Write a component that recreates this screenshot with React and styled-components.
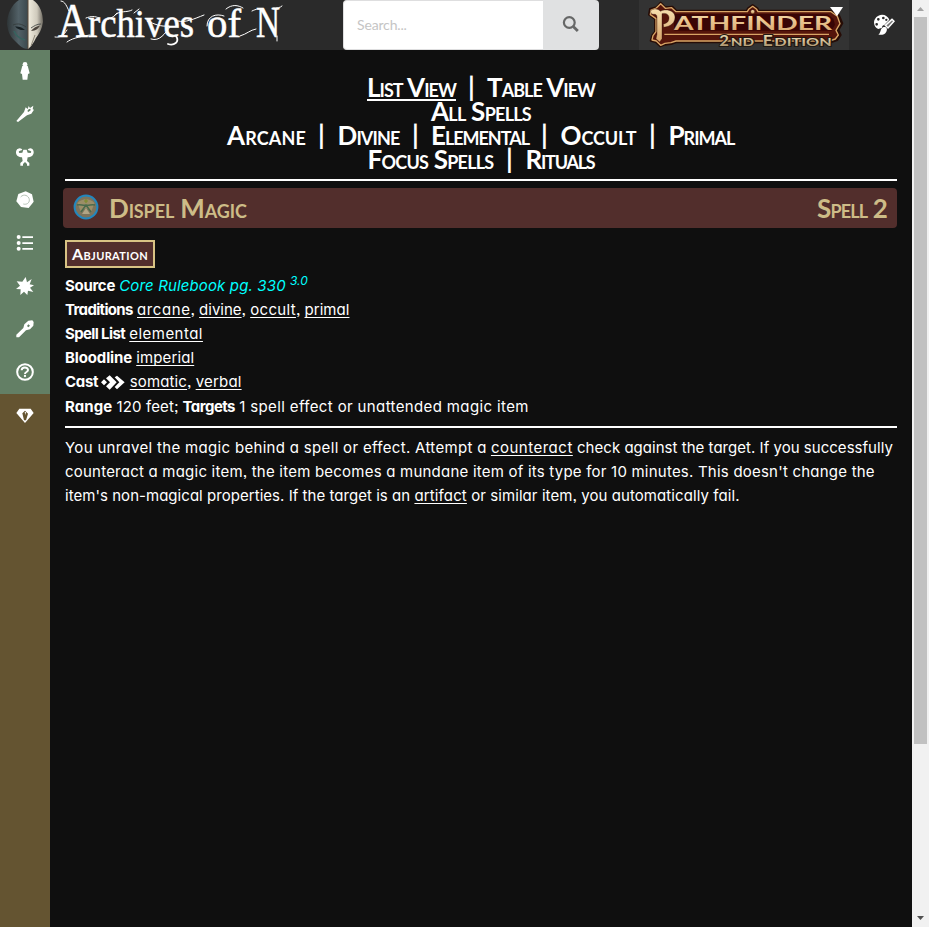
import React from 'react';
import styled, { createGlobalStyle, css } from 'styled-components';

const Global = createGlobalStyle`
  * { box-sizing: border-box; }
  body { margin: 0; background: #0f0f0f; color: #fff; overflow: hidden; }
`;

const bodyFont = css`
  font-family: "Century Gothic", Inter, sans-serif;
  font-feature-settings: "cv11", "ss03";
`;
const titleFont = css`
  font-family: "Century Gothic", Lato, sans-serif;
  font-weight: 700;
  font-variant: small-caps;
`;

const Window = styled.div`
  display: grid;
  grid-template-columns: 1fr 17px;
  height: 100vh;
`;
const Page = styled.div`
  display: flex;
  flex-direction: column;
  min-width: 0;
`;
const Header = styled.header`
  display: flex;
  flex: 0 0 50px;
  background: #2a2a2a;
`;
const Brand = styled.a`
  display: block;
  width: 343px;
  height: 50px;
`;
const SearchBox = styled.div`
  display: flex;
  width: 256px;
  height: 50px;
`;
const SearchInput = styled.input`
  width: 200px;
  padding: 0 13px 2px;
  border: 1px solid #dededf;
  border-right: 0;
  border-radius: 4px 0 0 4px;
  outline: 0;
  background: #fff;
  font: 14px Lato, sans-serif;
  letter-spacing: -0.15px;
  &::placeholder { color: #c5c5c5; opacity: 1; }
`;
const SearchButton = styled.button`
  width: 56px;
  padding: 0;
  border: 0;
  border-radius: 0 4px 4px 0;
  background: #e0e1e2;
`;
const GameMenu = styled.div`
  width: 210px;
  height: 50px;
  margin-left: 40px;
  background: #333;
`;
const ThemeButton = styled.div`
  display: flex;
  align-items: center;
  justify-content: center;
  flex: 1;
  padding-left: 6px;
`;
const Drawing = styled.svg`
  display: block;
  width: ${(p) => p.$w}px;
  height: ${(p) => p.$h}px;
`;
const Body = styled.div`
  display: flex;
  flex: 1;
`;
const SideNav = styled.nav`
  display: flex;
  flex-direction: column;
  width: 50px;
  background: #645431;
`;
const NavItem = styled.a`
  display: flex;
  align-items: center;
  justify-content: center;
  height: 43px;
  padding-bottom: 1px;
  color: #fff;
  background: ${(p) => (p.$alt ? '#645431' : '#637f65')};
`;
const Content = styled.main`
  flex: 1;
  min-width: 0;
  padding: 26px 15px 0;
`;
const ViewNav = styled.div`
  ${titleFont}
  font-size: 26px;
  line-height: 23px;
  text-align: center;
`;
const ViewRow = styled.div`
  display: flex;
  justify-content: center;
  height: 24px;
  white-space: pre;
`;
const ViewLink = styled.a`
  width: ${(p) => p.$w}px;
  letter-spacing: ${(p) => p.$ls}px;
  color: #fff;
  ${(p) => p.$on && css`height: 25px; border-bottom: 2px solid #fff;`}
`;
const Bar = styled.span`
  width: 31px;
  text-align: center;
`;
const Rule = styled.hr`
  height: 2px;
  margin: ${(p) => p.$m};
  border: 0;
  background: #fff;
`;
const SpellTitle = styled.h1`
  ${titleFont}
  display: flex;
  align-items: center;
  height: 40px;
  margin: 0 0 12px -2px;
  width: 834px;
  padding: 0 10px 2px;
  border-radius: 4px;
  background: #522e2c;
  color: #cdbc87;
  font-size: 26px;
  line-height: 40px;
`;
const SpellName = styled.span`
  flex: 1;
  margin: 2px 0 0 10px;
  letter-spacing: -0.12px;
`;
const SpellLevel = styled.span`
  margin-top: 2px;
  letter-spacing: -0.84px;
`;
const Trait = styled.span`
  ${titleFont}
  display: block;
  width: 90px;
  height: 28px;
  border: 2px solid #d8c384;
  background: #522e2c;
  font-size: 16px;
  line-height: 24px;
  letter-spacing: 0.36px;
  text-align: center;
`;
const Details = styled.div`
  ${bodyFont}
  padding-top: 6px;
  font-size: 15px;
`;
const DetailRow = styled.div`
  height: ${(p) => (p.$tall ? 25 : 24)}px;
  line-height: ${(p) => (p.$tall ? 26 : 24)}px;
  white-space: nowrap;
`;
const Label = styled.b`
  letter-spacing: ${(p) => p.$ls}px;
`;
const Link = styled.a`
  text-decoration: underline 1px;
  text-underline-offset: 2px;
  text-decoration-skip-ink: none;
  letter-spacing: ${(p) => p.$ls}px;
`;
const Run = styled.span`
  letter-spacing: ${(p) => p.$ls}px;
`;
const Source = styled.a`
  color: #00ffff;
  font-style: italic;
  letter-spacing: 0.14px;
`;
const Edition = styled.sup`
  color: #00ffff;
  font-size: 12px;
  font-style: italic;
  line-height: 0;
`;
const Actions = styled.svg`
  width: 24px;
  height: 15px;
  margin-left: -1px;
  vertical-align: -3px;
`;
const Description = styled.div`
  ${bodyFont}
  font-size: 15px;
  line-height: 24px;
  white-space: nowrap;
`;
const ScrollTrack = styled.div`
  display: flex;
  flex-direction: column;
  align-items: center;
  background: #f1f1f1;
`;
const ScrollThumb = styled.div`
  width: 13px;
  height: 727px;
  background: #c1c1c1;
`;
const ScrollGap = styled.div`
  flex: 1;
`;

const Logo = () => (
  <Drawing $w={343} $h={50} viewBox="0 0 343 50">
    <defs>
      <linearGradient id="dark" x1="0" x2="1"><stop offset="0" stopColor="#2e3537" /><stop offset=".55" stopColor="#526167" /><stop offset="1" stopColor="#3b484d" /></linearGradient>
      <linearGradient id="light" x1="0" x2="1"><stop offset="0" stopColor="#f1eddf" /><stop offset=".6" stopColor="#cfcabc" /><stop offset="1" stopColor="#6d6960" /></linearGradient>
    </defs>
    <path d="M28 0H19C11 5 7 15 7 24c1 8 3 12 7 16 4 4 8 9 14 9z" fill="url(#dark)" />
    <path d="M28 0h5c7 5 10 13 10 22-1 7-4 12-7 16-2 4-5 9-8 11z" fill="url(#light)" />
    <path d="M28 0v49" stroke="#5b4938" strokeWidth="1" />
    <path d="M15 26.500c3-.5 7 .5 10 3.500-4 .5-7-.5-10-3.500z" fill="#182124" />
    <path d="M31 31c2-3 6-5 9-5.500-2 3.500-4 5-9 5.500z" fill="#4b443d" />
    <path d="M13 25c5-2 9-1 13 2M31 28c3-2 6-4 10-4" stroke="#343a3a" strokeWidth=".8" fill="none" />
    <path d="M14 31c2 5 7 8 11 9" stroke="#37635f" strokeWidth="1.600" fill="none" />
    <path d="M35 35l-4 11" stroke="#8e8778" strokeWidth="1" fill="none" />
    <g fill="#fff" stroke="#fff" strokeWidth=".5" fontFamily="Liberation Serif, serif" fontSize="39">
      <text x="58" y="37" fontSize="48" textLength="30" lengthAdjust="spacingAndGlyphs">A</text>
      <text x="88" y="37" textLength="106" lengthAdjust="spacingAndGlyphs">rchives</text>
      <text x="207" y="37" textLength="34" lengthAdjust="spacingAndGlyphs">of</text>
      <text x="256" y="37" fontSize="44" textLength="24" lengthAdjust="spacingAndGlyphs">N</text>
    </g>
    <g fill="none" stroke="#fff" strokeWidth="1" strokeLinecap="round">
      <path d="M61 1c4 0 6 6 8 10M55 37c5 1 9-2 12-7M67 42c4-3 10-5 23-7M86 18c5-2 9-2 13 0M108 19c4-1 7-3 9-6M115 15c5-5 12-2 17-5M134 13l5-4M147 21c8 3 13 6 22 5M151 39c9 3 14-6 19-12M178 21c7 2 16-2 26-6M207 26c0-10 9-13 17-10M226 9c6-5 12-4 17-1M240 36c7-2 10-6 16-7M252 11c4-2 8-3 12-1M273 8c4 0 7 0 9-2M277 36v5" />
      <path d="M176 36c4 6-2 10-8 8" strokeWidth="1.800" />
    </g>
  </Drawing>
);

const Pathfinder = () => (
  <Drawing $w={210} $h={50} viewBox="0 0 630 150">
    <defs>
      <linearGradient id="gold" x1="0" x2="0" y1="0" y2="1"><stop offset="0" stopColor="#f8dfae" /><stop offset="1" stopColor="#d6a269" /></linearGradient>
      <linearGradient id="steel" x1="0" x2="0" y1="0" y2="1"><stop offset="0" stopColor="#fff1cc" /><stop offset="1" stopColor="#a48b63" /></linearGradient>
    </defs>
    <path d="M52 22l13-14 14 14 21-2 12 12h211l4-7 14-10 14 10 4 7h221l20 14 10 24-12 20 7 15-10 15-20 7H111l-15 5-19 2-13 5-14-13-15-4 5-17 8-10V57l-18-13 3-17z" fill="#260c06" stroke="#260c06" strokeWidth="6" strokeLinejoin="round" />
    <path d="M52 24l13-13 14 14 19-2 13 12h214l4-7 12-9 12 9 4 7h219l19 14 8 22-12 20 7 14-9 12-18 6H111l-15 5-18 2-13 6-13-13-13-3 3-13 9-12V56l-17-12 2-14z" fill="#55150b" stroke="#d9a566" strokeWidth="4" strokeLinejoin="round" />
    <path d="M103 42H565l18 14 5 18-10 18H106z" fill="#390505" />
    <path d="M76 103H570" stroke="#d9a566" strokeWidth="4" />
    <g fill="url(#gold)" stroke="#260c06" strokeWidth="1">
      <path d="M35 32c8-6 21-8 29 2 14-9 44-4 44 17 0 18-13 28-34 31l-1-10c14-3 17-10 17-19 0-10-9-15-21-12v75l-7 10-11-10 3-13V52c0-8-4-10-10-9-6 0-11-6-9-11z" />
      <circle cx="341" cy="35" r="6" />
    </g>
    <text x="105" y="91" fontFamily="Lato, sans-serif" fontWeight="700" fontSize="57" textLength="474" lengthAdjust="spacingAndGlyphs" fill="url(#gold)">ATHFINDER</text>
    <g fill="url(#steel)" stroke="#211913" strokeWidth="6" paintOrder="stroke" fontFamily="Lato, sans-serif" fontWeight="700">
      <text x="241" y="137" fontSize="48" textLength="29" lengthAdjust="spacingAndGlyphs">2</text>
      <text x="275" y="137" fontSize="36" textLength="70" lengthAdjust="spacingAndGlyphs">ND</text>
      <text x="371" y="137" fontSize="46" textLength="30" lengthAdjust="spacingAndGlyphs">E</text>
      <text x="406" y="137" fontSize="36" textLength="172" lengthAdjust="spacingAndGlyphs">DITION</text>
    </g>
    <path d="M573 21h39l-18 28z" fill="#fff" />
  </Drawing>
);

const icons = [
  <><circle cx="27" cy="7" r="7" /><path d="M19 11h16l6 23-5 2-2 17H20l-2-17-5-2z" /></>,
  <path fillRule="evenodd" d="M29 7l6 5 3-9 4 6 10-7-2 11 4 1-8 12-13 5L6 51l-5-3 23-27zm9 6l-4 5 3 3 7-5-1-5z" />,
  <path d="M5 3c7-4 12-1 14 3l-7 2c-4 1-5 4-2 7l9-1 3-9h10l3 9 9 1c3-3 2-6-2-7l-7-2c2-4 8-7 14-3 5 5 6 14 0 20-5 4-10 5-14 5l-2 11 7 6v8h-7v-5l-6-6-6 6v5h-8v-8l7-6-2-11c-4 0-9-1-14-5-6-6-5-15 0-20z" />,
  <><path d="M29 1l19 9 5 22-15 19-23-3L1 31 7 9z" /><path d="M14 18c9-11 25-4 26 8 1 10-9 16-18 13" fill="none" stroke="#b4c2b5" strokeWidth="3" /></>,
  <><circle cx="8" cy="9" r="6" /><circle cx="8" cy="27" r="6" /><circle cx="8" cy="44" r="6" /><path d="M19 7h32v5H19zM19 25h32v5H19zM19 42h32v5H19z" /></>,
  <path d="M29 0l4 16 14-10-6 16 13 3-12 7 10 13-16-4-2 13-10-10-11 10 1-17-14-1 12-10L2 13l17 1z" />,
  <path fillRule="evenodd" d="M37 2l12-1 4 5-1 11-10 11-12 3L9 52H1v-8l21-20 3-11zm0 11l-4 5 4 4 5-5z" />,
  <><circle cx="27" cy="27" r="23.5" fill="none" stroke="currentColor" strokeWidth="6" /><path d="M17 22c0-11 19-11 19-1 0 7-9 5-9 12" fill="none" stroke="currentColor" strokeWidth="6" /><circle cx="27" cy="39" r="3.5" /></>,
  <path fillRule="evenodd" d="M10 8h34l9 13-26 30L1 21zm17 6l-8 8 5 21h6l6-20zm-1 4h4l-2 9z" />,
];

const views = [
  [['List View', 89, -0.95, true], ['Table View', 108, -0.97]],
  [['All Spells', 100, -0.74]],
  [['Arcane', 79, 0.15], ['Divine', 63, -0.86], ['Elemental', 98, -1.03], ['Occult', 77, -0.08], ['Primal', 67, -0.98]],
  [['Focus Spells', 127, -0.76], ['Rituals', 70, -1.23]],
];

export default function App() {
  return (
    <Window>
      <Global />
      <Page>
        <Header>
          <Brand><Logo /></Brand>
          <SearchBox>
            <SearchInput placeholder="Search..." />
            <SearchButton aria-label="Search">
              <Drawing $w={56} $h={50} viewBox="0 0 56 50" fill="none" stroke="#666767">
                <circle cx="26.3" cy="22.5" r="5.4" strokeWidth="2.2" />
                <path d="M30.5 26.7l4.300 4.300" strokeWidth="2.8" />
              </Drawing>
            </SearchButton>
          </SearchBox>
          <GameMenu><Pathfinder /></GameMenu>
          <ThemeButton>
            <Drawing $w={22} $h={22} viewBox="0 0 66 66" fill="#fff">
              <path fillRule="evenodd" d="M27 2c10 0 19 6 22 15L34 33c-4 1-7 3-7 8l-11 4C8 43 3 34 3 25 4 12 14 3 27 2zM16 12a4 4 0 100 8 4 4 0 000-8zm15-4a4 4 0 100 8 4 4 0 000-8zM11 27a4 4 0 100 8 4 4 0 000-8zm29-13a3 3 0 100 7 3 3 0 000-7z" />
              <path d="M37 34l20-18 6 6-18 20z" fill="#777" stroke="#fff" strokeWidth="4.500" />
              <path d="M30 40c9-3 15 4 10 13-4 8-13 11-24 9 8-4 5-18 14-22z" />
            </Drawing>
          </ThemeButton>
        </Header>
        <Body>
          <SideNav>
            {icons.map((icon, i) => (
              <NavItem key={i} $alt={i === 8}>
                <Drawing $w={18} $h={18} viewBox="0 0 54 54" fill="currentColor">{icon}</Drawing>
              </NavItem>
            ))}
          </SideNav>
          <Content>
            <ViewNav>
              {views.map((row) => (
                <ViewRow key={row[0][0]}>
                  {row.map(([name, w, ls, on], i) => (
                    <React.Fragment key={name}>
                      {i > 0 && <Bar>|</Bar>}
                      <ViewLink $w={w} $ls={ls} $on={on}>{name}</ViewLink>
                    </React.Fragment>
                  ))}
                </ViewRow>
              ))}
            </ViewNav>
            <Rule $m="7px 0" />
            <SpellTitle>
              <Drawing $w={26} $h={26} viewBox="0 0 26 26">
                <circle cx="13" cy="13" r="11.400" fill="#7d745c" stroke="#2387bd" strokeWidth="2" />
                <path d="M4.500 9c5-5 12-5 17 0l-3 8-5.500-3-5.500 3z" fill="#9b8e68" />
                <path d="M4 11c4-1 6 1 9 0 3 1 5-1 9 0M8 18l5-7 5 7" fill="none" stroke="#4a6b4c" strokeWidth="1.500" />
                <path d="M9 20l4-6 4 6z" fill="#b0a585" />
                <path d="M13 5v4M11 7h4" stroke="#7d8c2c" strokeWidth="1.200" />
              </Drawing>
              <SpellName>Dispel Magic</SpellName>
              <SpellLevel>Spell 2</SpellLevel>
            </SpellTitle>
            <Trait>Abjuration</Trait>
            <Details>
              <DetailRow><Label $ls={-0.31}>Source</Label> <Source>Core Rulebook pg. 330</Source> <Edition>3.0</Edition></DetailRow>
              <DetailRow><Label $ls={-0.66}>Traditions</Label> <Link $ls={0.6}>arcane</Link>, <Link $ls={0}>divine</Link>, <Link $ls={0.34}>occult</Link>, <Link $ls={0.05}>primal</Link></DetailRow>
              <DetailRow><Label $ls={-0.63}>Spell List</Label> <Link $ls={0.47}>elemental</Link></DetailRow>
              <DetailRow><Label $ls={-0.14}>Bloodline</Label> <Link $ls={0.12}>imperial</Link></DetailRow>
              <DetailRow>
                <Label $ls={-0.3}>Cast</Label>{' '}
                <Actions viewBox="0 0 72 45" fill="#fff">
                  <path d="M9 13l9 9-9 9-9-9zM15 10L26 1l21 21-21 22-11-10 12-12zM41 7l7-5 23 20-23 21-7-7 14-14z" />
                </Actions>{' '}
                <Link $ls={0.15}>somatic</Link>, <Link $ls={0.2}>verbal</Link>
              </DetailRow>
              <DetailRow $tall><Label $ls={0.1}>Range</Label> <Run $ls={0.11}>120 feet;</Run> <Label $ls={-0.55}>Targets</Label> <Run $ls={0.37}>1 spell effect or unattended magic item</Run></DetailRow>
            </Details>
            <Rule $m="7px 0 8px" />
            <Description>
              <Run $ls={0.32}>You unravel the magic behind a spell or effect. Attempt a</Run> <Link $ls={0.5}>counteract</Link> <Run $ls={0.03}>check against the target. If you successfully</Run><br />
              <Run $ls={0.22}>counteract a magic item, the item becomes a mundane item of its type for 10 minutes. This doesn't change the</Run><br />
              <Run $ls={0.04}>item's non-magical properties. If the target is an</Run> <Link $ls={0.14}>artifact</Link> <Run $ls={0.08}>or similar item, you automatically fail.</Run>
            </Description>
          </Content>
        </Body>
      </Page>
      <ScrollTrack>
        <Drawing $w={17} $h={17} viewBox="0 0 17 17"><path d="M5 11h7L8.500 7z" fill="#a3a3a3" /></Drawing>
        <ScrollThumb />
        <ScrollGap />
        <Drawing $w={17} $h={17} viewBox="0 0 17 17"><path d="M5 6h7l-3.500 4z" fill="#505050" /></Drawing>
      </ScrollTrack>
    </Window>
  );
}
